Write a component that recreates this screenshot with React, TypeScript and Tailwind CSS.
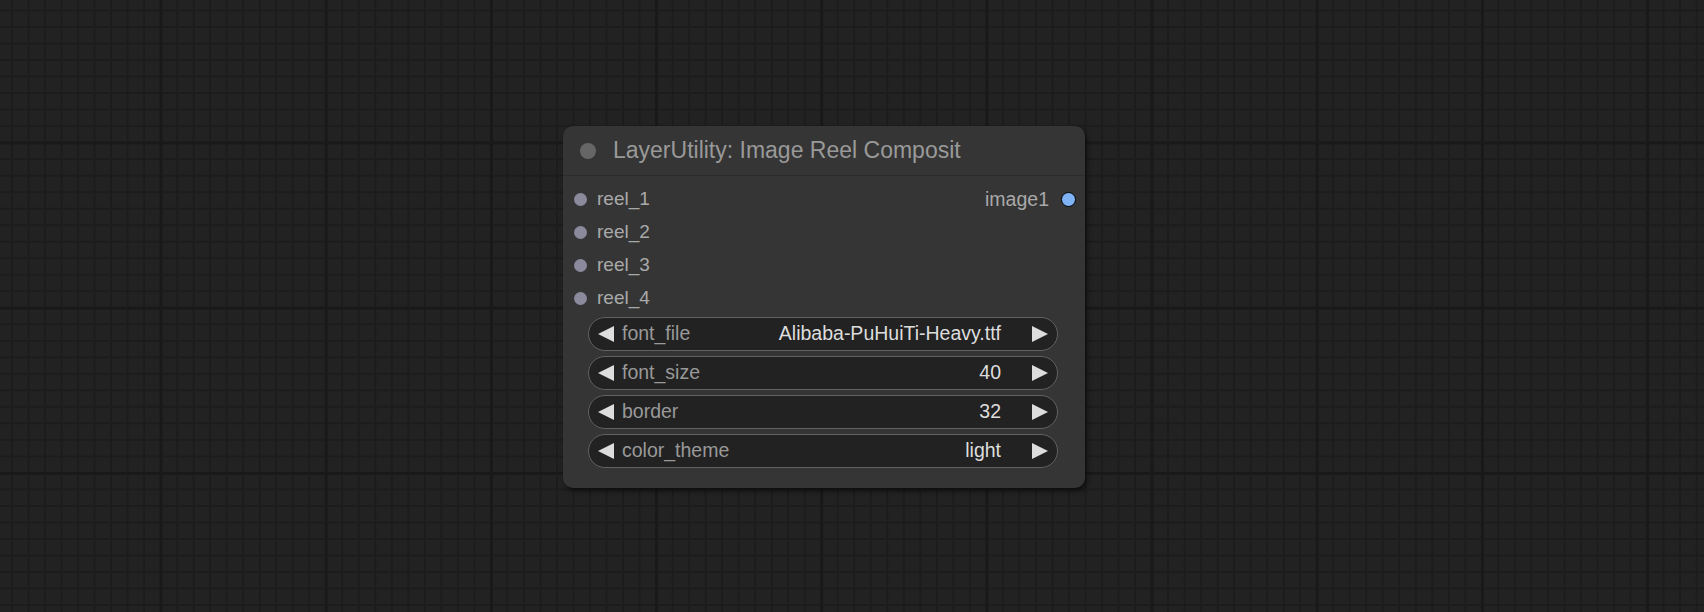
const slots = ["reel_1", "reel_2", "reel_3", "reel_4"];

const widgets = [
  { label: "font_file", value: "Alibaba-PuHuiTi-Heavy.ttf" },
  { label: "font_size", value: "40" },
  { label: "border", value: "32" },
  { label: "color_theme", value: "light" },
];

function Arrow({ dir }: { dir: "left" | "right" }) {
  return (
    <svg width="16" height="16" viewBox="0 0 16 16" className="shrink-0">
      {dir === "left" ? (
        <polygon points="16,0 16,16 0,8" fill="#dddddd" />
      ) : (
        <polygon points="0,0 0,16 16,8" fill="#dddddd" />
      )}
    </svg>
  );
}

function Widget({ label, value }: { label: string; value: string }) {
  return (
    <div className="ml-[25px] flex h-[34px] w-[470px] items-center rounded-full border-[1.5px] border-[#616161] bg-[#222222] px-[9px]">
      <Arrow dir="left" />
      <span className="ml-[8px] text-[19.5px] text-[#999999]">{label}</span>
      <span className="ml-auto mr-[31px] text-[19.5px] text-[#dddddd]">{value}</span>
      <Arrow dir="right" />
    </div>
  );
}

export default function App() {
  return (
    <div className="relative h-[612px] w-[1704px] overflow-hidden bg-[#222222] bg-[image:linear-gradient(to_right,#191919_3px,transparent_3px),linear-gradient(to_bottom,#191919_3px,transparent_3px),linear-gradient(to_right,#1c1c1c_2px,transparent_2px),linear-gradient(to_bottom,#1c1c1c_2px,transparent_2px)] bg-[size:165.2px_165.2px,165.2px_165.2px,16.52px_16.52px,16.52px_16.52px] bg-[position:159.5px_0,0_141.5px,11px_0,0_9.5px] font-['Liberation_Sans',Arial,sans-serif]">
      {/* node */}
      <div className="absolute left-[563px] top-[126px] w-[522px] rounded-[10px] bg-[#353535] shadow-[2px_3px_5px_rgba(0,0,0,0.55)]">
        <div className="flex h-[50px] items-center border-b border-[#2c2c2c] pl-[17px]">
          <div className="h-[16px] w-[16px] rounded-full bg-[#666666]" />
          <span className="ml-[17px] text-[23px] text-[#999999]">LayerUtility: Image Reel Composit</span>
        </div>

        <div className="pt-[7px] pb-[20px]">
          {slots.map((s, i) => (
            <div key={s} className="flex h-[33px] items-center">
              <div className="ml-[11px] h-[13px] w-[13px] rounded-full bg-[#8a8a9c]" />
              <span className="ml-[10px] text-[19px] text-[#a9a9a9]">{s}</span>
              {i === 0 && (
                <div className="ml-auto mr-[9px] flex items-center">
                  <span className="text-[19.5px] text-[#a9a9a9]">image1</span>
                  <div className="ml-[12px] h-[15px] w-[15px] rounded-full border-[1.5px] border-black bg-[#7fb3f5]" />
                </div>
              )}
            </div>
          ))}

          <div className="mt-[2px] flex flex-col gap-[5px]">
            {widgets.map((w) => (
              <Widget key={w.label} label={w.label} value={w.value} />
            ))}
          </div>
        </div>
      </div>
    </div>
  );
}
